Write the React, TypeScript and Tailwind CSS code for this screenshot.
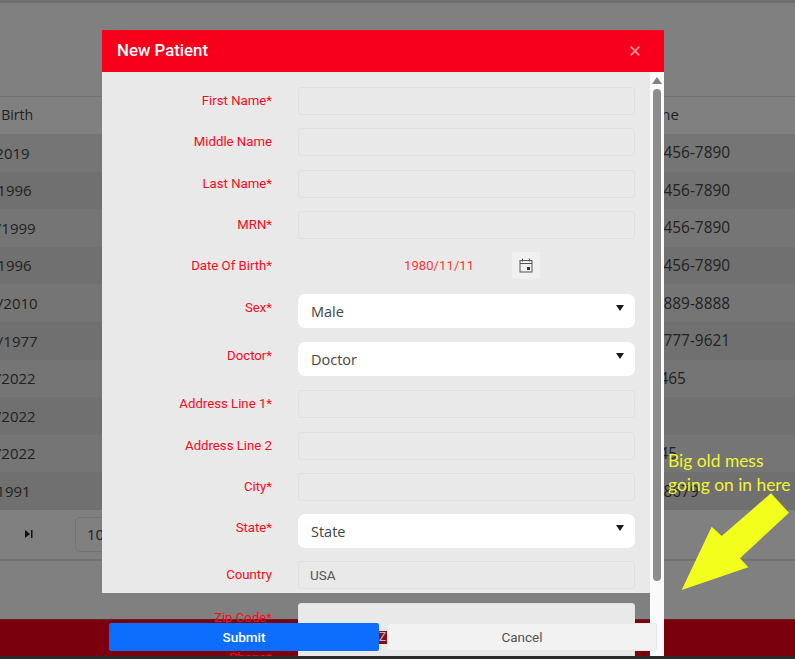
import React from "react";

const rows = [
  { d: "01/01/2019", p: "(123) 456-7890", m: "-ml-[50px]" },
  { d: "01/01/1996", p: "(123) 456-7890", m: "-ml-[48px]" },
  { d: "01/17/1999", p: "(123) 456-7890", m: "-ml-[44px]" },
  { d: "01/01/1996", p: "(123) 456-7890", m: "-ml-[48px]" },
  { d: "10/10/2010", p: "(888) 889-8888", m: "-ml-[42px]" },
  { d: "12/12/1977", p: "(555) 777-9621", m: "-ml-[42px]" },
  { d: "01/17/2022", p: "(123)465", m: "-ml-[44px]" },
  { d: "01/17/2022", p: "", m: "-ml-[44px]" },
  { d: "01/17/2022", p: "(123)45", m: "-ml-[44px]" },
  { d: "01/01/1991", p: "(123) 8679", m: "-ml-[49px]" },
];

function Label({ children, cls = "" }: { children: React.ReactNode; cls?: string }) {
  return (
    <div className={`w-[170px] shrink-0 text-right text-[13.2px] leading-[18px] text-[#f70a1e] ${cls}`}>{children}</div>
  );
}

function InputRow({ label, value }: { label: string; value?: string }) {
  return (
    <div className="flex items-center h-[28px] mb-[13.33px]">
      <Label>{label}</Label>
      <div className="ml-[26px] w-[337px] h-[28px] shrink-0 rounded-[3px] border border-[#e0e0e0] bg-[#e9e9e9] px-[11px] flex items-center text-[13.5px] text-[#555555]">
        {value}
      </div>
    </div>
  );
}

function SelectRow({ label, value, cls = "mb-[14px]" }: { label: string; value: string; cls?: string }) {
  return (
    <div className={`flex h-[34px] ${cls}`}>
      <Label cls="mt-[5px]">{label}</Label>
      <div className="ml-[26px] w-[337px] h-[34px] shrink-0 rounded-[7px] bg-white pl-[13px] pr-[11px] pt-[1px] flex items-center justify-between font-['Open_Sans'] text-[14.5px] text-[#444444]">
        <span>{value}</span>
        <svg width="8" height="6" viewBox="0 0 8 6" className="-mt-[7px] shrink-0">
          <path d="M0 0h8L4 6z" fill="#1a1a1a" />
        </svg>
      </div>
    </div>
  );
}

export default function App() {
  return (
    <div className="relative h-[659px] w-[795px] overflow-hidden bg-[#808080] font-['Roboto',sans-serif]">
      <div className="h-[3px] bg-[#6e6e6e]" />
      <div className="h-[93px]" />

      <div className="relative font-['Open_Sans',sans-serif] text-[15px] text-[#222222]">
        <div className="flex h-[38px] items-center border-t border-[#747474]">
          <div className="w-[700px] -ml-[50px] -mt-[3px] shrink-0 whitespace-nowrap text-[14px]">Date of Birth</div>
        </div>
        <div className="absolute left-[634px] top-[7px] whitespace-nowrap">Phone</div>
        {rows.map((r, i) => (
          <div
            key={i}
            className={`relative flex h-[37.6px] items-center whitespace-nowrap ${i % 2 === 0 ? "bg-[#757575]" : "bg-[#707070]"}`}
          >
            <div className={`w-[680px] shrink-0 ${r.m}`}>{r.d}</div>
            <div className="absolute left-[624px] text-[15.4px]">{r.p}</div>
          </div>
        ))}
      </div>

      <div className="relative flex h-[51px] items-center border-b-2 border-[#747474]">
        <svg width="8" height="8" viewBox="0 0 8 8" className="ml-[25px] shrink-0">
          <path d="M0 0l5 4-5 4zM6 0h1.5v8H6z" fill="#111111" />
        </svg>
        <div className="ml-[42px] flex h-[35px] w-[60px] shrink-0 items-center rounded-[5px] border border-[#747474] pl-[11px] font-['Open_Sans'] text-[15px] text-[#222222]">
          10
        </div>
      </div>

      <div className="mt-[58px] h-[37px] bg-[#7a000e] border-t border-[#6e1a1f]" />
      <div className="relative z-10 h-[3px] bg-[#2e2a28]" />

      <div className="absolute left-[102px] top-[30px] w-[562px]">
        <div className="flex h-[42px] items-center justify-between bg-[#f7001c] pl-[15px] pr-[24px]">
          <span className="text-[16.8px] leading-[22px] -mt-[2px] font-medium text-white">New Patient</span>
          <svg width="10" height="10" viewBox="0 0 10 10" stroke="#ff8f9c" strokeWidth="1.8">
            <path d="M0.7 0.7l8.6 8.6M9.3 0.7L0.7 9.3" />
          </svg>
        </div>
        <div className="relative">
          <div className="h-[521px] w-[548px] bg-[#e9e9e9] pt-[15px]">
            <InputRow label="First Name*" />
            <InputRow label="Middle Name" />
            <InputRow label="Last Name*" />
            <InputRow label="MRN*" />
            <div className="flex h-[27px] mb-[15px] items-center">
              <Label>Date Of Birth*</Label>
              <div className="ml-[132px] w-[100px] text-[13px] text-[#f53a3a] tracking-[0.1px]">1980/11/11</div>
              <div className="ml-[8px] flex h-[27px] w-[28px] items-center justify-center rounded-[2px] bg-[#f0f0f0]">
                <svg width="14" height="15" viewBox="0 0 14 15" fill="none" stroke="#555555">
                  <rect x="1" y="2.5" width="12" height="11.5" />
                  <path d="M1 5.5h12M3.5 0.5v3M10.5 0.5v3" />
                  <rect x="8" y="9" width="3" height="3" fill="#333333" stroke="none" />
                </svg>
              </div>
            </div>
            <SelectRow label="Sex*" value="Male" />
            <SelectRow label="Doctor*" value="Doctor" />
            <InputRow label="Address Line 1*" />
            <InputRow label="Address Line 2" />
            <InputRow label="City*" />
            <SelectRow label="State*" value="State" cls="mt-[1px] mb-[13px]" />
            <InputRow label="Country" value="USA" />
            <div className="flex h-[41px]">
              <Label cls="mt-[6px]">Zip Code*</Label>
              <div className="ml-[26px] w-[337px] h-[60px] shrink-0 rounded-t-[3px] border border-[#e0e0e0] bg-[#e9e9e9]" />
            </div>
            <div className="flex">
              <Label cls="mt-[5px]">Phone*</Label>
            </div>
          </div>

          <div className="absolute right-0 top-0 flex h-[584px] w-[14px] flex-col items-center bg-[#fafafa] pt-[5px]">
            <svg width="10" height="7" viewBox="0 0 10 7" className="shrink-0"><path d="M0 7h10L5 0z" fill="#808080" /></svg>
            <div className="mt-[5px] h-[492px] w-[8px] rounded-[4px] bg-[#8c8c8c]" />
          </div>

          <div className="absolute left-[7px] top-[551px] flex items-center">
            <div className="flex h-[28px] w-[270px] items-center justify-center rounded-[2px] bg-[#0d6efd] text-[13.5px] font-medium text-white">
              Submit
            </div>
            <div className="h-[13px] w-[8px] overflow-hidden bg-[#8a0a14] text-[12px] leading-[13px] text-[#b9b9b9]">Z</div>
            <div className="flex h-[28px] w-[270px] items-center justify-center rounded-[2px] bg-[#f2f2f2] border border-[#e8e8e8] text-[13.5px] text-[#555555]">
              Cancel
            </div>
          </div>
        </div>
      </div>

      <div className="absolute left-[668px] top-[449px] font-['Lato',sans-serif] text-[17.4px] leading-[23.5px] text-[#f2f530] whitespace-nowrap">
        Big old mess
        <br />
        going on in here
      </div>
      <svg className="absolute left-[680px] top-[490px]" width="112" height="102" viewBox="0 0 112 102">
        <path d="M1.7 100L31.7 36.7L41.7 46L91 3.3L109 22.7L60 68.3L68.3 77.3Z" fill="#f2ff1c" />
      </svg>
    </div>
  );
}
